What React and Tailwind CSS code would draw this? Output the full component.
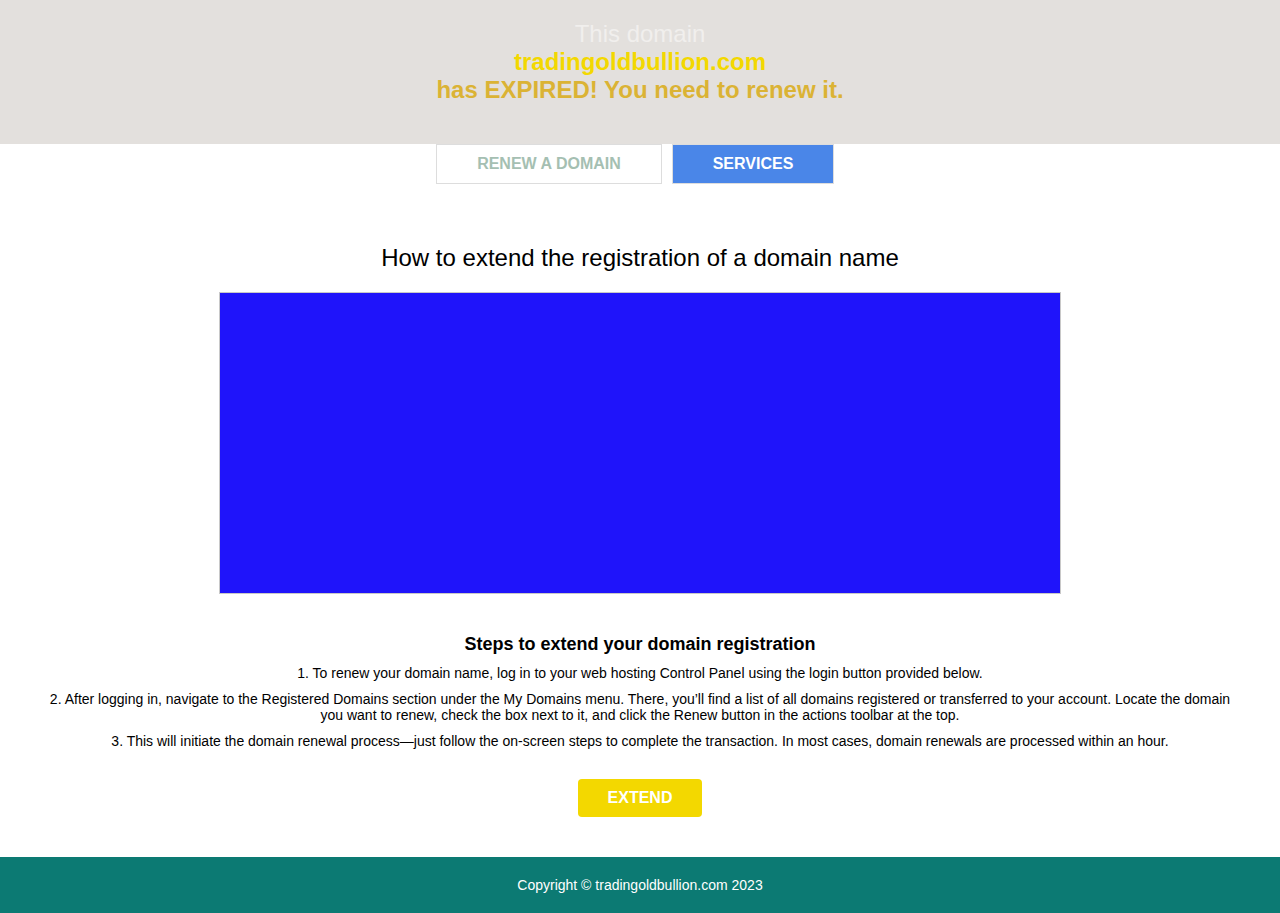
export default function App() {
    const steps = [
        '1. To renew your domain name, log in to your web hosting Control Panel using the login button provided below.',
        '2. After logging in, navigate to the Registered Domains section under the My Domains menu. There, you\u2019ll find a list of all domains registered or transferred to your account. Locate the domain you want to renew, check the box next to it, and click the Renew button in the actions toolbar at the top.',
        '3. This will initiate the domain renewal process\u2014just follow the on-screen steps to complete the transaction. In most cases, domain renewals are processed within an hour.',
    ];

    return (
        <div className="min-h-[913px] flex flex-col bg-white font-['Liberation_Sans',Arial,sans-serif] text-black">
            {/* Header */}
            <header className="h-[144px] bg-[#e3e0dd] pt-[20px] text-center text-[24px] leading-[28px]">
                <div className="text-[#f1efed]">This domain</div>
                <div className="font-bold text-[#f3d800]">tradingoldbullion.com</div>
                <div className="font-bold text-[#dbb334]">has EXPIRED! You need to renew it.</div>
            </header>

            {/* Nav */}
            <nav className="flex justify-center gap-[10px] pr-[10px]">
                <a className="w-[226px] h-[40px] flex items-center justify-center border border-[#dddddd] bg-white text-[16px] font-bold text-[#a5bfb2]">
                    RENEW A DOMAIN
                </a>
                <a className="w-[162px] h-[40px] flex items-center justify-center border border-[#dddddd] bg-[#4a86e8] text-[16px] font-bold text-white">
                    SERVICES
                </a>
            </nav>

            {/* Main */}
            <main className="flex-1 flex flex-col items-center">
                <h1 className="mt-[60px] text-[24px] leading-[28px] text-center">
                    How to extend the registration of a domain name
                </h1>
                <div className="mt-[20px] w-[842px] h-[302px] bg-[#1f14fa] border border-[#c8c8c8]" />

                <section className="mt-[40px] w-full px-10 text-center">
                    <h2 className="text-[18px] leading-[20px] font-bold mb-[11px]">Steps to extend your domain registration</h2>
                    <div className="flex flex-col gap-[10px] text-[14px] leading-[16px]">
                        {steps.map((s, i) => (
                            <p key={i}>{s}</p>
                        ))}
                    </div>
                </section>

                <button className="mt-[30px] w-[124px] h-[38px] rounded-[4px] bg-[#f3d800] text-white text-[16px] font-bold">
                    EXTEND
                </button>
                <div className="h-[40px]" />
            </main>

            {/* Footer */}
            <footer className="h-[56px] bg-[#0c7a73] flex items-center justify-center text-white text-[14px]">
                Copyright © tradingoldbullion.com 2023
            </footer>
        </div>
    );
}
